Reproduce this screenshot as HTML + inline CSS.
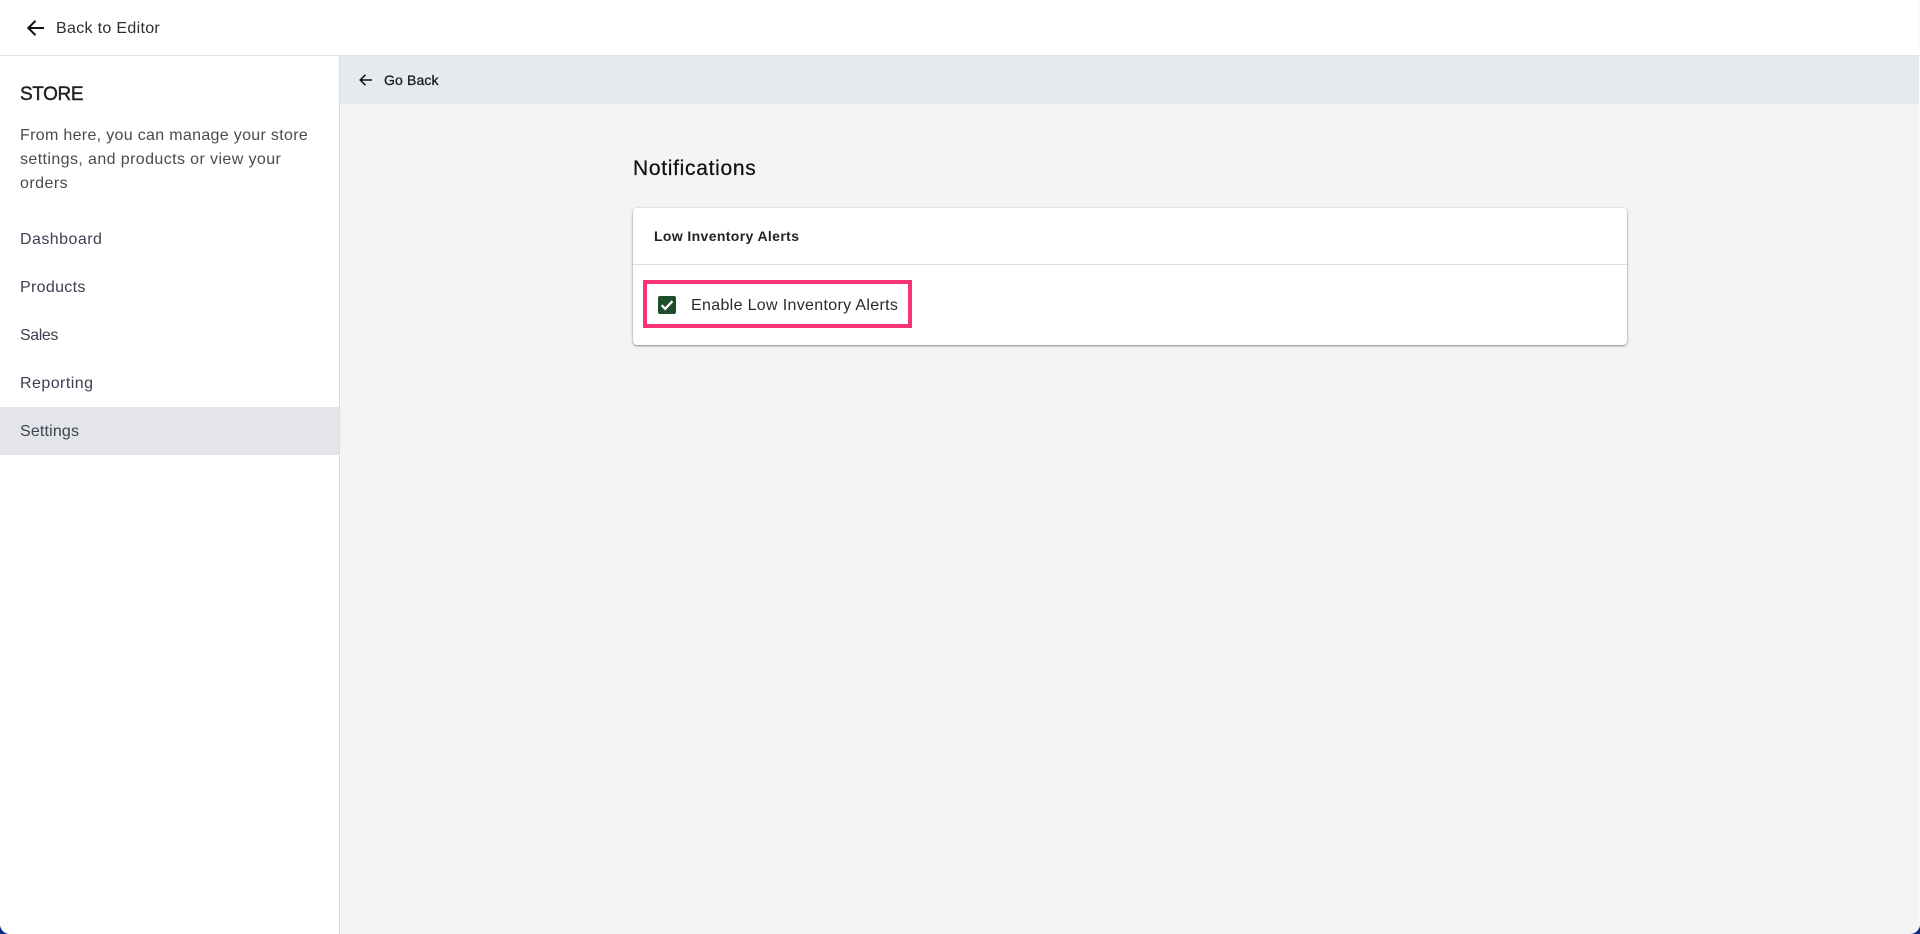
<!DOCTYPE html>
<html lang="en">
<head>
<meta charset="utf-8">
<title>Notifications</title>
<style>
html,body{margin:0;padding:0;width:1920px;height:934px;overflow:hidden;background:#0b2a85;}
body{font-family:"Liberation Sans",sans-serif;position:relative;}
#app{position:absolute;left:0;top:0;width:1920px;height:934px;background:#f4f4f4;border-radius:0 0 10px 10px;overflow:hidden;}
.t{position:absolute;white-space:nowrap;line-height:24px;}
#top{position:absolute;left:0;top:0;width:1920px;height:55px;background:#fff;border-bottom:1px solid #e3e3e3;}
#side{position:absolute;left:0;top:56px;width:339px;height:878px;background:#fff;border-right:1px solid #dcdcdc;}
#bar{position:absolute;left:340px;top:56px;width:1579px;height:48px;background:#e7eaed;}
#sel{position:absolute;left:0;top:407px;width:339px;height:48px;background:#e4e5e9;}
#strip{position:absolute;left:1919px;top:0;width:1px;height:934px;background:#fafafa;}
#card{position:absolute;left:633px;top:208px;width:994px;height:137px;background:#fff;border-radius:4px;box-shadow:0 1px 2px rgba(0,0,0,.4),0 0 3px rgba(0,0,0,.1);}
#div{position:absolute;left:633px;top:264px;width:994px;height:1px;background:#dedede;}
#pink{position:absolute;left:643px;top:280px;width:261px;height:40px;border:4px solid #f9337a;}
#cb{position:absolute;left:658px;top:296px;width:18px;height:18px;background:#1e4d2b;border-radius:2px;}
.nav{left:20px;font-size:16px;color:#3d4150;}
.p{left:20px;font-size:16px;color:#4a4a50;}
</style>
</head>
<body>
<div id="app">
  <div id="top"></div>
  <div id="side"></div>
  <div id="bar"></div>
  <div id="sel"></div>

  <svg style="position:absolute;left:24px;top:16px" width="24" height="24" viewBox="0 0 24 24"><path d="M20 12H5M11.5 4.8L4.3 12l7.2 7.2" fill="none" stroke="#111" stroke-width="2"/></svg>
  <div class="t" style="left:56px;top:17px;font-size:16px;color:#2e2e33;letter-spacing:.32px">Back to Editor</div>

  <svg style="position:absolute;left:357px;top:71px" width="18" height="18" viewBox="0 0 18 18"><path d="M15 9H3.5M8.5 3.8L3.2 9l5.3 5.2" fill="none" stroke="#111" stroke-width="1.5"/></svg>
  <div class="t" style="left:384px;top:68px;font-size:14px;font-weight:400;color:#1c1c20;-webkit-text-stroke:.3px #1c1c20;letter-spacing:.14px">Go Back</div>

  <div class="t" style="left:20px;top:83px;font-size:19px;font-weight:400;color:#1f1f23;-webkit-text-stroke:.4px #1f1f23;letter-spacing:-.4px">STORE</div>
  <div class="t p" style="top:124px;letter-spacing:.32px">From here, you can manage your store</div>
  <div class="t p" style="top:148px;letter-spacing:.4px">settings, and products or view your</div>
  <div class="t p" style="top:172px;letter-spacing:.45px">orders</div>

  <div class="t nav" style="top:228px;letter-spacing:.45px">Dashboard</div>
  <div class="t nav" style="top:276px;letter-spacing:.32px">Products</div>
  <div class="t nav" style="top:324px;letter-spacing:-.4px">Sales</div>
  <div class="t nav" style="top:372px;letter-spacing:.45px">Reporting</div>
  <div class="t nav" style="top:420px;letter-spacing:.17px">Settings</div>

  <div class="t" style="left:633px;top:157px;font-size:21px;color:#111;-webkit-text-stroke:.25px #111;letter-spacing:.7px">Notifications</div>

  <div id="card"></div>
  <div id="div"></div>
  <div class="t" style="left:654px;top:224px;font-size:14px;font-weight:700;color:#222;letter-spacing:.37px">Low Inventory Alerts</div>
  <div id="pink"></div>
  <div id="cb"><svg style="position:absolute;left:0;top:0" width="18" height="18" viewBox="0 0 18 18"><path d="M3.6 9.2l3.6 3.6 7.2-7.6" fill="none" stroke="#fff" stroke-width="2.3"/></svg></div>
  <div class="t" style="left:691px;top:294px;font-size:16px;color:#2a2a2e;letter-spacing:.33px">Enable Low Inventory Alerts</div>
  <div id="strip"></div>
</div>
</body>
</html>
